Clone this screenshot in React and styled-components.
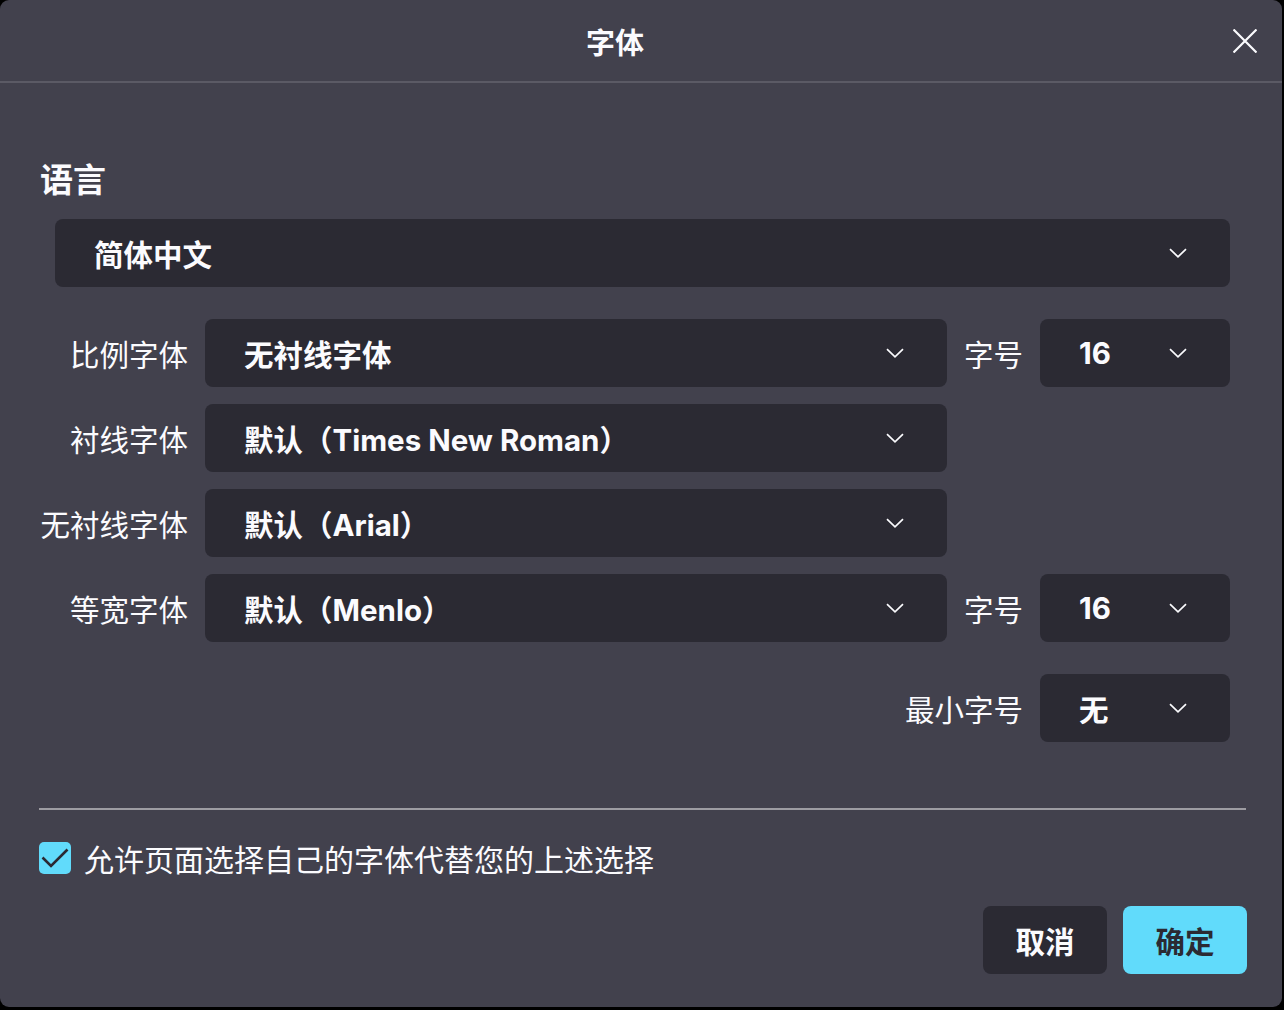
import styled, { createGlobalStyle } from 'styled-components';

const GlobalStyle = createGlobalStyle`
  html, body {
    margin: 0;
    padding: 0;
    background: #000;
  }
  body {
    font-family: Inter, "Noto Sans CJK SC", sans-serif;
    color: #fbfbfe;
  }
`;

const Dialog = styled.div`
  width: 1282px;
  height: 1007px;
  background: #42414d;
  border-radius: 9px;
  display: flex;
  flex-direction: column;
  overflow: hidden;
`;

const Header = styled.div`
  height: 81px;
  border-bottom: 2px solid #5b5a65;
  display: flex;
  align-items: center;
  justify-content: center;
  padding-right: 52px;
  position: relative;
  flex-shrink: 0;
`;

const Title = styled.h1`
  margin: 0;
  font-size: 29px;
  font-weight: 700;
`;

const CloseButton = styled.button`
  position: absolute;
  right: 25px;
  top: 29px;
  width: 24px;
  height: 24px;
  padding: 0;
  border: none;
  background: none;
  display: flex;
  align-items: center;
  justify-content: center;
  cursor: pointer;
`;

const Body = styled.div`
  flex: 1;
  padding: 76px 35px 0 39px;
  display: flex;
  flex-direction: column;
`;

const Heading = styled.h2`
  margin: 0 0 18px 1px;
  font-size: 33px;
  font-weight: 700;
  line-height: 42px;
`;

const LanguageWrap = styled.div`
  padding: 0 17px 0 16px;
`;

const Fields = styled.div`
  display: grid;
  grid-template-columns: 149px 742px 59px 190px;
  column-gap: 17px;
  row-gap: 17px;
  align-items: center;
  margin-top: 32px;
`;

const Label = styled.label`
  font-size: 29.5px;
  text-align: right;
  white-space: nowrap;
  grid-column: ${(p) => p.$col || 'auto'};
`;

const SelectBox = styled.div`
  height: 68px;
  background: #2b2a33;
  border-radius: 8px;
  display: flex;
  align-items: center;
  justify-content: space-between;
  padding: 0 43px 0 39px;
  box-sizing: border-box;
  font-size: 29.5px;
  font-weight: 700;
  white-space: nowrap;
  grid-column: ${(p) => p.$col || 'auto'};
`;

const MinRow = styled.div`
  margin-top: 32px;
  display: flex;
  justify-content: flex-end;
  align-items: center;
  gap: 17px;
  padding-right: 17px;
`;

const SmallSlot = styled.div`
  width: 190px;
`;

const Divider = styled.hr`
  margin: 66px 1px 0 0;
  border: none;
  border-top: 2px solid #9d9ca2;
`;

const CheckRow = styled.label`
  margin-top: 26px;
  display: flex;
  align-items: center;
  gap: 13px;
  font-size: 30px;
`;

const CheckBox = styled.span`
  width: 32px;
  height: 32px;
  border-radius: 5px;
  background: #61dbfb;
  display: flex;
  align-items: center;
  justify-content: center;
`;

const Actions = styled.div`
  margin-top: 26px;
  display: flex;
  justify-content: flex-end;
  gap: 16px;
`;

const Button = styled.button`
  width: 124px;
  height: 68px;
  border: none;
  border-radius: 8px;
  font-family: Inter, "Noto Sans CJK SC", sans-serif;
  font-size: 29.5px;
  font-weight: 700;
  background: ${(p) => (p.$primary ? '#61dbfb' : '#2b2a33')};
  color: ${(p) => (p.$primary ? '#2b2a33' : '#fbfbfe')};
`;

const Chevron = () => (
  <svg width="18" height="10" viewBox="0 0 18 10" fill="none">
    <path d="M1 1.2 L9 8.8 L17 1.2" stroke="#fbfbfe" strokeWidth="1.7" />
  </svg>
);

const Select = ({ value, col }) => (
  <SelectBox $col={col}>
    <span>{value}</span>
    <Chevron />
  </SelectBox>
);

const fontRows = [
  { label: '比例字体', value: '无衬线字体', size: '16' },
  { label: '衬线字体', value: '默认（Times New Roman）' },
  { label: '无衬线字体', value: '默认（Arial）' },
  { label: '等宽字体', value: '默认（Menlo）', size: '16' },
];

export default function App() {
  return (
    <>
      <GlobalStyle />
      <Dialog>
        <Header>
          <Title>字体</Title>
          <CloseButton aria-label="关闭">
            <svg width="24" height="24" viewBox="0 0 24 24">
              <path d="M0.5 0.5 L23.5 23.5 M23.5 0.5 L0.5 23.5" stroke="#fbfbfe" strokeWidth="2.2" />
            </svg>
          </CloseButton>
        </Header>
        <Body>
          <Heading>语言</Heading>
          <LanguageWrap>
            <Select value="简体中文" />
          </LanguageWrap>
          <Fields>
            {fontRows.map((row) => (
              <>
                <Label key={row.label} $col="1">{row.label}</Label>
                <Select value={row.value} col="2" />
                {row.size && (
                  <>
                    <Label $col="3">字号</Label>
                    <Select value={row.size} col="4" />
                  </>
                )}
              </>
            ))}
          </Fields>
          <MinRow>
            <Label>最小字号</Label>
            <SmallSlot>
              <Select value="无" />
            </SmallSlot>
          </MinRow>
          <Divider />
          <CheckRow>
            <CheckBox>
              <svg width="28" height="20" viewBox="0 0 28 20" fill="none">
                <path d="M1.5 9.5 L10 18 L26.5 1.5" stroke="#2b2a33" strokeWidth="2.6" />
              </svg>
            </CheckBox>
            允许页面选择自己的字体代替您的上述选择
          </CheckRow>
          <Actions>
            <Button>取消</Button>
            <Button $primary>确定</Button>
          </Actions>
        </Body>
      </Dialog>
    </>
  );
}
